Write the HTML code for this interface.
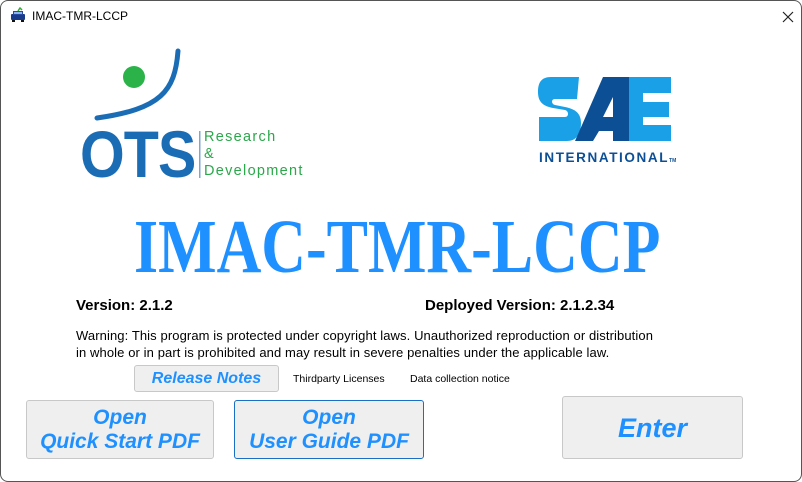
<!DOCTYPE html>
<html><head><style>
*{margin:0;padding:0;box-sizing:border-box}
body{width:802px;height:482px;overflow:hidden;background:#fff;font-family:"Liberation Sans",sans-serif;position:relative}
.win{position:absolute;left:0;top:0;width:802px;height:482px;border:1px solid #555;border-radius:8px;overflow:hidden;background:#fff}
.abs{position:absolute}
.btn{position:absolute;background:#efefef;border:1px solid #c8c8c8;border-radius:3px;color:#1e90ff;font-weight:bold;font-style:italic;text-align:center;display:flex;align-items:center;justify-content:center;line-height:24px}
</style></head><body><div class="win">
<svg class="abs" style="left:9px;top:6px" width="16" height="16" viewBox="0 0 16 16"><rect x="1" y="7" width="14" height="6" rx="1" fill="#1a3a8a"/><rect x="3" y="4" width="10" height="4" fill="#2a4aa0"/><rect x="4" y="5" width="8" height="2" fill="#8ab4f0"/><path d="M8 4 L10 1 L12 3" stroke="#3a3" stroke-width="1.5" fill="none"/><rect x="2" y="13" width="3" height="2" fill="#111"/><rect x="11" y="13" width="3" height="2" fill="#111"/></svg>
<div class="abs" style="left:31px;top:8px;font-size:12px;color:#000">IMAC-TMR-LCCP</div>
<svg class="abs" style="left:781px;top:10px" width="12" height="12"><path d="M1 1L11 11M11 1L1 11" stroke="#222" stroke-width="1.2"/></svg>

<svg class="abs" style="left:60px;top:40px" width="280" height="150">
<circle cx="73" cy="36" r="11" fill="#2bb34a"/>
<path d="M117 10 C114 50 100 68 36 77" stroke="#1a6db5" stroke-width="5" fill="none" stroke-linecap="round"/>
<rect x="138" y="90" width="1.5" height="47" fill="#7fa6cf"/>
</svg>
<div class="abs" style="left:79px;top:118px;font-size:66px;font-weight:bold;color:#1a6db5;letter-spacing:-1px;line-height:70px;transform:scaleX(0.87);transform-origin:left">OTS</div>
<div class="abs" style="left:203px;top:128px;font-size:14.5px;color:#2aa84a;letter-spacing:1.3px;line-height:17px">Research<br>&amp;<br>Development</div>

<svg class="abs" style="left:536px;top:74px" width="140" height="70" viewBox="0 0 140 70">
<path d="M42 2 H14 C4 2 1 8 1 17 C1 27 6 31 16 33 L28 35 C32 36 32 42 28 42 H2 V66 H30 C40 66 44 58 44 48 C44 38 38 34 28 32 L18 30 C14 29 14 24 18 24 H40 Z" fill="#1aa0e6"/>
<path d="M92 2 H134 V18 H106 V27 H132 V42 H106 V50 H134 V66 H92 Z" fill="#1aa0e6"/>
<path d="M66 2 H92 V66 H76 V56 H62 L56 66 H38 Z M76 42 V22 L66 42 Z" fill="#0c4f95"/>
</svg>
<div class="abs" style="left:538px;top:149px;font-size:13.5px;font-weight:bold;color:#0c4f95;letter-spacing:1.6px">INTERNATIONAL<span style="font-size:5px;letter-spacing:0">TM</span></div>

<div class="abs" style="left:133px;top:206px;font-family:'Liberation Serif',serif;font-weight:bold;font-size:76px;color:#1e90ff;line-height:80px;transform:scaleX(0.815);transform-origin:left">IMAC-TMR-LCCP</div>

<div class="abs" style="left:75px;top:296px;font-size:15px;font-weight:bold;color:#000">Version: 2.1.2</div>
<div class="abs" style="left:424px;top:296px;font-size:15px;font-weight:bold;color:#000">Deployed Version: 2.1.2.34</div>
<div class="abs" style="left:75px;top:326px;font-size:13px;color:#000;line-height:17px;letter-spacing:0.1px">Warning: This program is protected under copyright laws. Unauthorized reproduction or distribution<br>in whole or in part is prohibited and may result in severe penalties under the applicable law.</div>

<div class="btn" style="left:133px;top:364px;width:145px;height:27px;font-size:16px">Release Notes</div>
<div class="abs" style="left:292px;top:372px;font-size:10.5px;color:#000">Thirdparty Licenses</div>
<div class="abs" style="left:409px;top:372px;font-size:10.5px;color:#000">Data collection notice</div>

<div class="btn" style="left:25px;top:399px;width:188px;height:59px;font-size:21px">Open<br>Quick Start PDF</div>
<div class="btn" style="left:233px;top:399px;width:190px;height:59px;font-size:21px;border-color:#1a6fc4">Open<br>User Guide PDF</div>
<div class="btn" style="left:561px;top:395px;width:181px;height:63px;font-size:27px">Enter</div>
</div></body></html>
